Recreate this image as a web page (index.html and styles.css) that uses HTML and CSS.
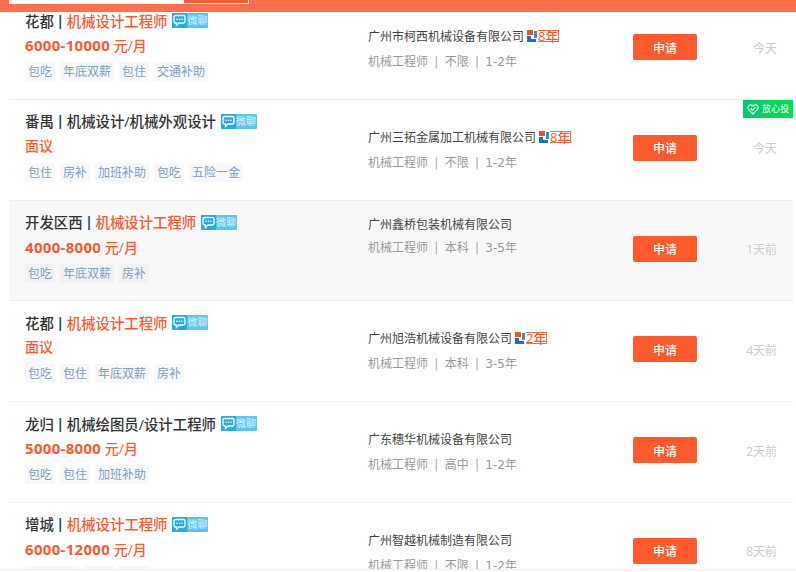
FILE: index.html
```
<!DOCTYPE html>
<html lang="zh-CN">
<head>
<meta charset="utf-8">
<title>机械设计工程师职位列表</title>
<link rel="stylesheet" href="styles.css">
</head>
<body>
<svg class="defs" width="0" height="0" aria-hidden="true">
  <symbol id="chat" viewBox="0 0 15 15"><path d="M3.500 2.500h8a1.500 1.500 0 0 1 1.500 1.500v4.500a1.500 1.500 0 0 1-1.500 1.500h-4.500l-2.500 2.500v-2.500h-1a1.500 1.500 0 0 1-1.500-1.500v-4.500a1.500 1.500 0 0 1 1.500-1.500z" fill="none" stroke="#fff" stroke-width="1.300"/><circle cx="5" cy="6.300" r=".8" fill="#fff"/><circle cx="7.500" cy="6.300" r=".8" fill="#fff"/><circle cx="10" cy="6.300" r=".8" fill="#fff"/></symbol>
  <symbol id="logo" viewBox="0 0 11 12"><rect x="0" y="0" width="6" height="5" fill="#f4511e"/><path d="M0 6h4v3h5v3h-9z" fill="#1673c9"/><rect x="7" y="1" width="3" height="7" fill="#2f8fe0"/></symbol>
</svg>
<header class="topbar"><div class="search"><div class="search-btn"></div></div></header>
<ul class="list">
  <li class="row">
    <div class="job">
      <div class="title"><span class="area">花都</span><span class="sep">|</span><span class="name">机械设计工程师</span><span class="chat"><svg class="chat-ic"><use href="#chat"/></svg><span class="chat-t">微聊</span></span></div>
      <div class="salary"><b>6000-10000</b> 元/月</div>
      <div class="tags"><span class="tag">包吃</span><span class="tag">年底双薪</span><span class="tag">包住</span><span class="tag">交通补助</span></div>
    </div>
    <div class="co">
      <div class="co-name">广州市柯西机械设备有限公司<span class="yr"><svg class="yr-ic"><use href="#logo"/></svg><span class="yr-t">8年</span></span></div>
      <div class="req">机械工程师<i>|</i>不限<i>|</i>1-2年</div>
    </div>
    <div class="act"><button class="apply">申请</button></div>
    <div class="date">今天</div>
  </li>
  <li class="row">
    <div class="job">
      <div class="title"><span class="area">番禺</span><span class="sep">|</span><span class="name dark">机械设计/机械外观设计</span><span class="chat"><svg class="chat-ic"><use href="#chat"/></svg><span class="chat-t">微聊</span></span></div>
      <div class="salary">面议</div>
      <div class="tags"><span class="tag">包住</span><span class="tag">房补</span><span class="tag">加班补助</span><span class="tag">包吃</span><span class="tag">五险一金</span></div>
    </div>
    <div class="co">
      <div class="co-name">广州三拓金属加工机械有限公司<span class="yr"><svg class="yr-ic"><use href="#logo"/></svg><span class="yr-t">8年</span></span></div>
      <div class="req">机械工程师<i>|</i>不限<i>|</i>1-2年</div>
    </div>
    <div class="act"><button class="apply">申请</button></div>
    <div class="date">今天</div>
    <div class="safe"><svg class="safe-ic" viewBox="0 0 12 12"><path d="M6 10.800 1.500 6.300a2.700 2.700 0 0 1 3.800-3.800l.7.7.7-.7a2.700 2.700 0 0 1 3.800 3.800z" fill="none" stroke="#fff" stroke-width="1.200"/><path d="M3.800 5.500 5.600 7.200 8.400 4.500" fill="none" stroke="#fff" stroke-width="1.100"/></svg><span class="safe-t">放心投</span></div>
  </li>
  <li class="row row-hover">
    <div class="job">
      <div class="title"><span class="area">开发区西</span><span class="sep">|</span><span class="name">机械设计工程师</span><span class="chat"><svg class="chat-ic"><use href="#chat"/></svg><span class="chat-t">微聊</span></span></div>
      <div class="salary"><b>4000-8000</b> 元/月</div>
      <div class="tags"><span class="tag">包吃</span><span class="tag">年底双薪</span><span class="tag">房补</span></div>
    </div>
    <div class="co co-tight">
      <div class="co-name">广州鑫桥包装机械有限公司</div>
      <div class="req">机械工程师<i>|</i>本科<i>|</i>3-5年</div>
    </div>
    <div class="act"><button class="apply">申请</button></div>
    <div class="date">1天前</div>
  </li>
  <li class="row">
    <div class="job">
      <div class="title"><span class="area">花都</span><span class="sep">|</span><span class="name">机械设计工程师</span><span class="chat"><svg class="chat-ic"><use href="#chat"/></svg><span class="chat-t">微聊</span></span></div>
      <div class="salary">面议</div>
      <div class="tags"><span class="tag">包吃</span><span class="tag">包住</span><span class="tag">年底双薪</span><span class="tag">房补</span></div>
    </div>
    <div class="co">
      <div class="co-name">广州旭浩机械设备有限公司<span class="yr"><svg class="yr-ic"><use href="#logo"/></svg><span class="yr-t">2年</span></span></div>
      <div class="req">机械工程师<i>|</i>本科<i>|</i>3-5年</div>
    </div>
    <div class="act"><button class="apply">申请</button></div>
    <div class="date">4天前</div>
  </li>
  <li class="row">
    <div class="job">
      <div class="title"><span class="area">龙归</span><span class="sep">|</span><span class="name dark">机械绘图员/设计工程师</span><span class="chat"><svg class="chat-ic"><use href="#chat"/></svg><span class="chat-t">微聊</span></span></div>
      <div class="salary"><b>5000-8000</b> 元/月</div>
      <div class="tags"><span class="tag">包吃</span><span class="tag">包住</span><span class="tag">加班补助</span></div>
    </div>
    <div class="co">
      <div class="co-name">广东穗华机械设备有限公司</div>
      <div class="req">机械工程师<i>|</i>高中<i>|</i>1-2年</div>
    </div>
    <div class="act"><button class="apply">申请</button></div>
    <div class="date">2天前</div>
  </li>
  <li class="row">
    <div class="job">
      <div class="title"><span class="area">增城</span><span class="sep">|</span><span class="name">机械设计工程师</span><span class="chat"><svg class="chat-ic"><use href="#chat"/></svg><span class="chat-t">微聊</span></span></div>
      <div class="salary"><b>6000-12000</b> 元/月</div>
      <div class="tags"><span class="tag">年底双薪</span><span class="tag">包住</span><span class="tag">房补</span></div>
    </div>
    <div class="co">
      <div class="co-name">广州智越机械制造有限公司</div>
      <div class="req">机械工程师<i>|</i>不限<i>|</i>1-2年</div>
    </div>
    <div class="act"><button class="apply">申请</button></div>
    <div class="date">8天前</div>
  </li>
</ul>
<div class="bottombar"></div>
</body>
</html>
```
FILE: styles.css
```
* { box-sizing: border-box; }
html, body { margin: 0; height: 100%; overflow: hidden; background: #fff; }
body { font-family: "Open Sans", "Noto Sans CJK SC", sans-serif; color: #333; position: relative; }
.defs { position: absolute; }
.topbar { position: absolute; top: 0; left: 0; right: 0; height: 12px; background: #ff6f4e; z-index: 2; padding-left: 9px; }
.search { width: 240px; height: 4px; background: #fff; display: flex; justify-content: flex-end; padding: 0 1px 1px 0; }
.search-btn { width: 64px; background: #ff5a2e; }
.list { list-style: none; margin: -1px 3px 0 9px; padding: 0; }
.row { position: relative; height: 100.8px; border-bottom: 1px solid #eee; display: grid; grid-template-columns: 343px 265px 1fr; padding-left: 16px; }
.row-hover { background: #f8f8f8; }
.job { padding-top: 11px; }
.title { display: flex; align-items: center; height: 20px; font-size: 14.4px; font-weight: 500; white-space: nowrap; color: #333; }
.sep { margin: 0 2.500px; color: #2a4a6a; font-weight: 700; }
.name { color: #ff5a2e; }
.name.dark { color: #333; }
.chat { display: inline-flex; height: 15px; width: 36px; margin: 1px 0 0 5px; background: #5cc6ee; border-radius: 1px; overflow: hidden; }
.chat-ic { width: 15px; height: 15px; background: #29abe2; flex: none; }
.chat-t { font-size: 10px; line-height: 15px; color: rgba(255, 255, 255, .75); font-weight: 400; }
.salary { margin-top: 5px; height: 20px; line-height: 20px; font-size: 14px; font-weight: 500; color: #ff5a2e; white-space: nowrap; }
.salary b { font-size: 15px; font-weight: 700; letter-spacing: .3px; }
.tags { display: flex; gap: 5px; margin-top: 7px; }
.tag { height: 19px; line-height: 19px; padding: 0 3px; font-size: 12px; color: #7f9fbf; background: #f8f8f8; white-space: nowrap; }
.row-hover .tag { background: #f2f2f2; }
.co { padding-top: 27px; }
.co-tight { padding-top: 13px; }
.co-name { display: flex; align-items: center; height: 20px; font-size: 12px; color: #444; white-space: nowrap; }
.req { margin-top: 6px; height: 20px; line-height: 20px; font-family: "DejaVu Sans", "Noto Sans CJK SC", sans-serif; font-size: 12px; color: #999; white-space: nowrap; }
.co-tight .req { margin-top: 4px; }
.req i { font-style: normal; margin: 0 6.300px; color: #aaa; }
.yr { display: inline-flex; align-items: center; margin-left: 3px; height: 12px; }
.yr-ic { width: 11px; height: 12px; flex: none; }
.yr-t { width: 21px; height: 12px; border: 1px solid #ff6a3d; border-left: 0; color: #ff5a2e; font-size: 13px; line-height: 10px; font-weight: 500; text-align: center; }
.act { padding-top: 35px; }
.apply { display: block; width: 64px; height: 26px; border: 0; border-radius: 2px; background: #ff5a2e; color: #fff; font: 500 12px "Noto Sans CJK SC", sans-serif; padding: 0; }
.date { position: absolute; right: 16px; top: 39.500px; font-size: 12px; line-height: 20px; color: #ccc; }
.safe { position: absolute; top: 0; right: 0; width: 50px; height: 18px; background: linear-gradient(90deg, #00c870, #00e050); display: flex; align-items: center; padding-left: 4px; gap: 3px; }
.safe-ic { width: 12px; height: 12px; flex: none; }
.safe-t { color: rgba(255, 255, 255, .9); font-size: 9px; font-weight: 500; line-height: 18px; white-space: nowrap; }
.bottombar { position: absolute; left: 0; right: 0; bottom: 0; height: 3px; background: #fff; border-top: 1px solid #eee; z-index: 2; }
```
